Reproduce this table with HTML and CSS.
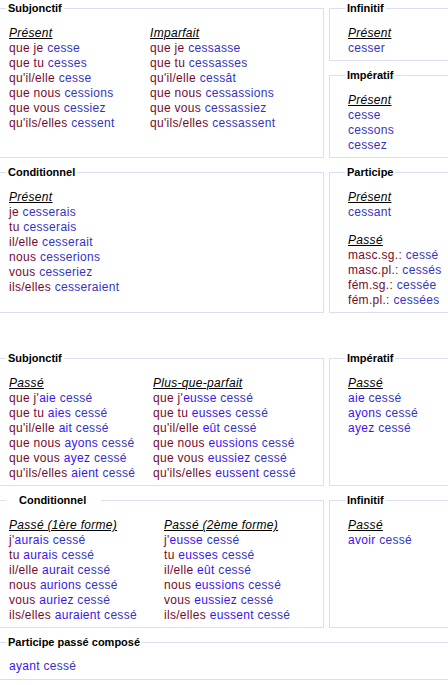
FILE: index.html
```html
<!DOCTYPE html>
<html lang="fr">
<head>
<meta charset="utf-8">
<title>cesser</title>
<link rel="stylesheet" href="styles.css">
</head>
<body>
<div class="page">
  <div class="section">
    <fieldset class="box">
      <legend>Subjonctif</legend>
      <div class="cols">
        <div class="col w141">
          <div class="hd">Présent</div>
          <div class="ln"><span class="p">que je</span> <span class="v">cesse</span></div>
          <div class="ln"><span class="p">que tu</span> <span class="v">cesses</span></div>
          <div class="ln"><span class="p">qu'il/elle</span> <span class="v">cesse</span></div>
          <div class="ln"><span class="p">que nous</span> <span class="v">cessions</span></div>
          <div class="ln"><span class="p">que vous</span> <span class="v">cessiez</span></div>
          <div class="ln"><span class="p">qu'ils/elles</span> <span class="v">cessent</span></div>
        </div>
        <div class="col">
          <div class="hd">Imparfait</div>
          <div class="ln"><span class="p">que je</span> <span class="v">cessasse</span></div>
          <div class="ln"><span class="p">que tu</span> <span class="v">cessasses</span></div>
          <div class="ln"><span class="p">qu'il/elle</span> <span class="v">cessât</span></div>
          <div class="ln"><span class="p">que nous</span> <span class="v">cessassions</span></div>
          <div class="ln"><span class="p">que vous</span> <span class="v">cessassiez</span></div>
          <div class="ln"><span class="p">qu'ils/elles</span> <span class="v">cessassent</span></div>
        </div>
      </div>
    </fieldset>
    <div class="stack">
      <fieldset class="box">
        <legend>Infinitif</legend>
        <div class="hd">Présent</div>
        <div class="ln"><span class="v">cesser</span></div>
      </fieldset>
      <fieldset class="box">
        <legend>Impératif</legend>
        <div class="hd">Présent</div>
        <div class="ln"><span class="v">cesse</span></div>
        <div class="ln"><span class="v">cessons</span></div>
        <div class="ln"><span class="v">cessez</span></div>
      </fieldset>
    </div>
    <fieldset class="box">
      <legend>Conditionnel</legend>
      <div class="hd">Présent</div>
      <div class="ln"><span class="p">je</span> <span class="v">cesserais</span></div>
      <div class="ln"><span class="p">tu</span> <span class="v">cesserais</span></div>
      <div class="ln"><span class="p">il/elle</span> <span class="v">cesserait</span></div>
      <div class="ln"><span class="p">nous</span> <span class="v">cesserions</span></div>
      <div class="ln"><span class="p">vous</span> <span class="v">cesseriez</span></div>
      <div class="ln"><span class="p">ils/elles</span> <span class="v">cesseraient</span></div>
    </fieldset>
    <fieldset class="box">
      <legend>Participe</legend>
      <div class="hd">Présent</div>
      <div class="ln"><span class="v">cessant</span></div>
      <div class="hd spaced">Passé</div>
      <div class="ln"><span class="p">masc.sg.:</span> <span class="v">cessé</span></div>
      <div class="ln"><span class="p">masc.pl.:</span> <span class="v">cessés</span></div>
      <div class="ln"><span class="p">fém.sg.:</span> <span class="v">cessée</span></div>
      <div class="ln"><span class="p">fém.pl.:</span> <span class="v">cessées</span></div>
    </fieldset>
  </div>

  <div class="section second">
    <fieldset class="box">
      <legend>Subjonctif</legend>
      <div class="cols">
        <div class="col w144">
          <div class="hd">Passé</div>
          <div class="ln"><span class="p">que j'</span><span class="a">aie</span> <span class="v">cessé</span></div>
          <div class="ln"><span class="p">que tu</span> <span class="a">aies</span> <span class="v">cessé</span></div>
          <div class="ln"><span class="p">qu'il/elle</span> <span class="a">ait</span> <span class="v">cessé</span></div>
          <div class="ln"><span class="p">que nous</span> <span class="a">ayons</span> <span class="v">cessé</span></div>
          <div class="ln"><span class="p">que vous</span> <span class="a">ayez</span> <span class="v">cessé</span></div>
          <div class="ln"><span class="p">qu'ils/elles</span> <span class="a">aient</span> <span class="v">cessé</span></div>
        </div>
        <div class="col">
          <div class="hd">Plus-que-parfait</div>
          <div class="ln"><span class="p">que j'</span><span class="a">eusse</span> <span class="v">cessé</span></div>
          <div class="ln"><span class="p">que tu</span> <span class="a">eusses</span> <span class="v">cessé</span></div>
          <div class="ln"><span class="p">qu'il/elle</span> <span class="a">eût</span> <span class="v">cessé</span></div>
          <div class="ln"><span class="p">que nous</span> <span class="a">eussions</span> <span class="v">cessé</span></div>
          <div class="ln"><span class="p">que vous</span> <span class="a">eussiez</span> <span class="v">cessé</span></div>
          <div class="ln"><span class="p">qu'ils/elles</span> <span class="a">eussent</span> <span class="v">cessé</span></div>
        </div>
      </div>
    </fieldset>
    <fieldset class="box">
      <legend>Impératif</legend>
      <div class="hd">Passé</div>
      <div class="ln"><span class="a">aie</span> <span class="v">cessé</span></div>
      <div class="ln"><span class="a">ayons</span> <span class="v">cessé</span></div>
      <div class="ln"><span class="a">ayez</span> <span class="v">cessé</span></div>
    </fieldset>
    <fieldset class="box">
      <legend class="wide">Conditionnel</legend>
      <div class="cols">
        <div class="col w155">
          <div class="hd">Passé (1ère forme)</div>
          <div class="ln"><span class="p">j'</span><span class="a">aurais</span> <span class="v">cessé</span></div>
          <div class="ln"><span class="p">tu</span> <span class="a">aurais</span> <span class="v">cessé</span></div>
          <div class="ln"><span class="p">il/elle</span> <span class="a">aurait</span> <span class="v">cessé</span></div>
          <div class="ln"><span class="p">nous</span> <span class="a">aurions</span> <span class="v">cessé</span></div>
          <div class="ln"><span class="p">vous</span> <span class="a">auriez</span> <span class="v">cessé</span></div>
          <div class="ln"><span class="p">ils/elles</span> <span class="a">auraient</span> <span class="v">cessé</span></div>
        </div>
        <div class="col">
          <div class="hd">Passé (2ème forme)</div>
          <div class="ln"><span class="p">j'</span><span class="a">eusse</span> <span class="v">cessé</span></div>
          <div class="ln"><span class="p">tu</span> <span class="a">eusses</span> <span class="v">cessé</span></div>
          <div class="ln"><span class="p">il/elle</span> <span class="a">eût</span> <span class="v">cessé</span></div>
          <div class="ln"><span class="p">nous</span> <span class="a">eussions</span> <span class="v">cessé</span></div>
          <div class="ln"><span class="p">vous</span> <span class="a">eussiez</span> <span class="v">cessé</span></div>
          <div class="ln"><span class="p">ils/elles</span> <span class="a">eussent</span> <span class="v">cessé</span></div>
        </div>
      </div>
    </fieldset>
    <fieldset class="box">
      <legend>Infinitif</legend>
      <div class="hd">Passé</div>
      <div class="ln"><span class="a">avoir</span> <span class="v">cessé</span></div>
    </fieldset>
    <fieldset class="box full">
      <legend>Participe passé composé</legend>
      <div class="ln"><span class="a">ayant</span> <span class="v">cessé</span></div>
    </fieldset>
  </div>
</div>
</body>
</html>
```
FILE: styles.css
```css
html, body {
  margin: 0;
  padding: 0;
  background: #ffffff;
}
body {
  overflow: hidden;
  font-family: "Liberation Sans", Arial, sans-serif;
  font-size: 12px;
  color: #000;
}
.page {
  margin-left: -10px;
  width: 480px;
  padding-top: 1px;
}
.section {
  display: grid;
  grid-template-columns: 334px 1fr;
  column-gap: 5px;
  row-gap: 7px;
}
.section.second {
  margin-top: 38px;
}
.stack {
  display: flex;
  flex-direction: column;
  gap: 7px;
}
.box {
  margin: 0;
  min-width: 0;
  border: 1px solid #dcdff2;
  padding: 10px 0 4px 18px;
}
.box.full {
  grid-column: 1 / 3;
  padding-top: 10px;
  padding-bottom: 5px;
}
legend {
  font-size: 11px;
  font-weight: bold;
  line-height: 14px;
  padding: 0 2px;
  margin-left: -3px;
  color: #000;
}
legend.wide {
  padding: 0 15px 0 13px;
}
.cols {
  display: flex;
}
.w141 { width: 141px; }
.w144 { width: 144px; }
.w155 { width: 155px; }
.hd {
  font-style: italic;
  text-decoration: underline;
  line-height: 16px;
  letter-spacing: 0.3px;
  color: #000;
  white-space: nowrap;
}
.hd.spaced {
  margin-top: 12px;
}
.ln {
  line-height: 15px;
  letter-spacing: 0.3px;
  white-space: nowrap;
}
.p { color: #760a2c; }
.v { color: #3434c0; }
.a { color: #3a14f0; }
```
